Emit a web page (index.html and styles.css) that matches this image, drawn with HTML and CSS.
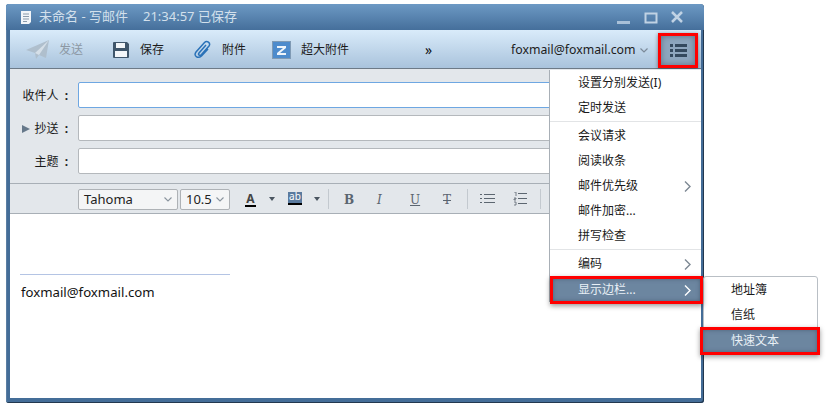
FILE: index.html
```html
<!DOCTYPE html>
<html lang="zh">
<head>
<meta charset="utf-8">
<title>未命名 - 写邮件</title>
<link rel="stylesheet" href="styles.css">
</head>
<body>
<div class="window">
  <header class="titlebar">
    <svg class="doc" width="12" height="15" viewBox="0 0 12 15"><path d="M1 1h10v11l-2 2H1z" fill="#f2f5f8"/><path d="M3 4h6M3 6.500h6M3 9h6M3 11.500h4" stroke="#8a9aaa"/></svg>
    <span class="title-name">未命名 - 写邮件</span>
    <span class="title-time">21:34:57 已保存</span>
    <span class="spacer"></span>
    <svg class="winbtns" width="70" height="14" viewBox="0 0 70 14"><path d="M0 10h13v3H0z" fill="#a9c0d8"/><path d="M28.500 2.500h11v9h-11z" fill="none" stroke="#c0d2e4" stroke-width="2"/><path d="M55 1l10 10M65 1L55 11" stroke="#c0d2e4" stroke-width="2.500"/></svg>
  </header>
  <div class="toolbar">
    <span class="tool send">
      <svg width="25" height="20" viewBox="0 0 25 20"><path d="M0 10L23 0l-3 18-7-3-3 4-1-6z" fill="#afbfcd"/><path d="M9 13L23 0 13 15" fill="#d5dfe8"/></svg>
      <span class="tool-label dim">发送</span>
    </span>
    <span class="tool save">
      <svg width="18" height="18" viewBox="0 0 18 18"><path d="M1 2a1 1 0 011-1h13l2 2v13a1 1 0 01-1 1H2a1 1 0 01-1-1z" fill="#3f566b"/><path d="M4 2h9v5H4zM3 10h12v6H3z" fill="#f3f6f9"/></svg>
      <span class="tool-label">保存</span>
    </span>
    <span class="tool clip">
      <svg width="19" height="20" viewBox="0 0 19 20"><path d="M13 5l-7 8c-1.500 2 1 3 2.500 1.500L16 6c2-3-2-6-4.500-3.500L3 12c-3 4 2 7 5.500 4L15 9" fill="none" stroke="#2a72b8" stroke-width="1.500"/></svg>
      <span class="tool-label">附件</span>
    </span>
    <span class="tool big">
      <svg width="19" height="18" viewBox="0 0 19 18"><rect x=".5" y=".5" width="18" height="17" fill="#4d8bcc" stroke="#7f9ab4"/><path d="M5 5h9v2l-6 5h6v2H5v-2l6-5H5z" fill="#eef4fa"/></svg>
      <span class="tool-label">超大附件</span>
    </span>
    <span class="more">»</span>
    <span class="account">foxmail@foxmail.com</span>
    <svg class="acct-caret" width="8" height="5" viewBox="0 0 8 5"><path d="M.5.500L4 4 7.500.500" fill="none" stroke="#7b8a99" stroke-width="1.200"/></svg>
    <span class="menu-btn">
      <svg width="17" height="13" viewBox="0 0 17 13"><path d="M0 0h3v3H0zM5 0h12v3H5zM0 5h3v3H0zM5 5h12v3H5zM0 10h3v3H0zM5 10h12v3H5z" fill="#34495e"/></svg>
    </span>
  </div>
  <div class="fields">
    <div class="field"><label class="lab">收件人<span class="colon">:</span></label><div class="input focus"></div></div>
    <div class="field"><label class="lab"><i class="tri"></i>抄送<span class="colon">:</span></label><div class="input"></div></div>
    <div class="field"><label class="lab">主题<span class="colon">:</span></label><div class="input"></div></div>
  </div>
  <div class="format">
    <div class="select font"><span>Tahoma</span><svg width="8" height="5" viewBox="0 0 8 5"><path d="M.5.500L4 4 7.500.500" fill="none" stroke="#8a949e" stroke-width="1.100"/></svg></div>
    <div class="select size"><span>10.5</span><svg width="8" height="5" viewBox="0 0 8 5"><path d="M.5.500L4 4 7.500.500" fill="none" stroke="#8a949e" stroke-width="1.100"/></svg></div>
    <span class="fmt color">A</span>
    <i class="caret c1"></i>
    <span class="fmt hilite">ab</span>
    <i class="caret c2"></i>
    <i class="sep s1"></i>
    <span class="fmt bold">B</span>
    <span class="fmt ital">I</span>
    <span class="fmt under">U</span>
    <span class="fmt strike">T</span>
    <i class="sep s2"></i>
    <svg class="list" width="15" height="10" viewBox="0 0 15 10"><path d="M0 .500h2M4 .500h11M0 4.500h2M4 4.500h11M0 8.500h2M4 8.500h11" stroke="#5c6670"/></svg>
    <svg class="nlist" width="15" height="14" viewBox="0 0 15 14"><path d="M1 0h2v4M1 6h2v1H1v1h2M1 10h2v3H1" fill="none" stroke="#5c6670" stroke-width=".8"/><path d="M5 1.500h9M5 6.500h9M5 11.500h9" stroke="#5c6670"/></svg>
    <i class="sep s3"></i>
  </div>
  <div class="body">
    <div class="sig-line"></div>
    <div class="sig">foxmail@foxmail.com</div>
  </div>
  <nav class="menu">
    <div class="item">设置分别发送(I)</div>
    <div class="item">定时发送</div>
    <div class="rule"></div>
    <div class="item">会议请求</div>
    <div class="item">阅读收条</div>
    <div class="item">邮件优先级<svg class="arrow" width="7" height="11" viewBox="0 0 7 11"><path d="M1 .500l5 5-5 5" fill="none" stroke="#7d8893" stroke-width="1.400"/></svg></div>
    <div class="item">邮件加密...</div>
    <div class="item">拼写检查</div>
    <div class="rule"></div>
    <div class="item">编码<svg class="arrow" width="7" height="11" viewBox="0 0 7 11"><path d="M1 .500l5 5-5 5" fill="none" stroke="#7d8893" stroke-width="1.400"/></svg></div>
    <div class="item hl">显示边栏...<svg class="arrow" width="7" height="11" viewBox="0 0 7 11"><path d="M1 .500l5 5-5 5" fill="none" stroke="#fff" stroke-width="1.400"/></svg></div>
  </nav>
  <nav class="submenu">
    <div class="item">地址簿</div>
    <div class="item">信纸</div>
    <div class="item hl">快速文本</div>
  </nav>
</div>
</body>
</html>
```
FILE: styles.css
```css
* { box-sizing: border-box; }
html, body { margin: 0; height: 100%; background: #fff; overflow: hidden; }
body {
  padding: 4px 0 0 6px;
  font: 12px/1.2 "Noto Sans", "Noto Sans CJK SC", sans-serif;
  color: #1a1a1a;
}
.window {
  position: relative;
  width: 698px;
  height: 399px;
  display: flex;
  flex-direction: column;
  padding: 0 3px 5px 4px;
  background: #446d98;
  border-radius: 3px 4px 3px 3px;
  box-shadow: inset -1px -1px 0 #22384f, inset 1px 0 0 #5b7ea3;
}
.titlebar {
  flex: 0 0 26px;
  margin: 0 -3px 0 -4px;
  padding: 0 22px 0 8px;
  display: flex;
  align-items: center;
  color: #d3e0ec;
  font-size: 13px;
  background: linear-gradient(#6c99c4, #456f9b);
  border-radius: 3px 4px 0 0;
}
.doc { margin-left: 6px; margin-right: 6px; }
.title-name { margin-left: 1px; }
.title-time { margin-left: 15px; }
.spacer { flex: 1; }
.winbtns { margin-top: 2px; margin-right: -5px; }
.toolbar {
  flex: 0 0 39px;
  display: flex;
  align-items: center;
  padding: 2px 0 0 16px;
  background: linear-gradient(#d9ebfa, #a9c3dc);
  border-bottom: 1px solid #6d7a87;
}
.tool { display: flex; align-items: center; color: #1c1c1c; }
.tool-label { margin-left: 10px; }
.dim { color: #8c98a4; }
.send { width: 86px; }
.save { width: 81px; }
.clip { width: 79px; }
.big { width: 153px; }
.send .tool-label { margin-left: 8px; }
.more { font-size: 14px; width: 86px; color: #111; }
.account { font-size: 12.300px; color: #1c1c1c; width: 129px; white-space: nowrap; }
.acct-caret { margin-left: 0; }
.menu-btn {
  margin-left: 10px;
  margin-top: 1px;
  width: 40px;
  height: 35px;
  display: flex;
  align-items: center;
  justify-content: center;
  border: 3px solid #f00;
  background: #8ea6be;
  box-shadow: inset 0 0 6px #5b6f84, 0 1px 4px rgba(0,0,0,.45);
}
.fields {
  flex: 0 0 115px;
  padding-top: 13px;
  display: flex;
  flex-direction: column;
  gap: 7px;
  background: #e3e7eb;
  border-bottom: 1px solid #a8afb6;
}
.field { display: flex; align-items: center; height: 26px; }
.lab {
  width: 68px;
  flex: none;
  padding: 2px 10px 0 0;
  text-align: right;
  position: relative;
  white-space: nowrap;
  font-size: 12px;
}
.colon { margin-left: 6px; font-weight: 700; }
.tri {
  position: absolute;
  left: 12px;
  top: 5px;
  border-left: 8px solid #66788a;
  border-top: 4.500px solid transparent;
  border-bottom: 4.500px solid transparent;
}
.input {
  flex: 1;
  height: 100%;
  background: #fff;
  border: 1px solid #b4b8bc;
  border-radius: 2px;
}
.focus { border-color: #6ea7e2; }
.format {
  flex: 0 0 30px;
  position: relative;
  background: #e3e7eb;
  border-bottom: 1px solid #a8afb6;
  display: flex;
  align-items: center;
  padding: 2px 0 0 68px;
}
.select {
  height: 21px;
  display: flex;
  align-items: center;
  justify-content: space-between;
  background: #f4f5f6;
  border: 1px solid #aeb2b6;
  border-radius: 2px;
  padding: 0 5px;
  font-size: 13px;
  color: #222;
}
.font { width: 100px; padding-right: 5px; }
.size { width: 50px; margin-left: 2px; }
.fmt, .caret, .sep, .list, .nlist { position: absolute; }
.fmt { font-family: "DejaVu Serif", serif; color: #5b6570; font-size: 12px; line-height: 16px; top: 7px; }
.color { left: 235px; width: 11px; font-family: "Noto Sans", sans-serif; font-weight: 700; color: #444; text-align: center; border-bottom: 2px solid #000; line-height: 13px; top: 8px; }
.hilite { left: 278px; width: 14px; height: 13px; top: 8px; background: #5a7a9e; color: #fff; font: 10px/9px "Noto Sans", sans-serif; text-align: center; border-bottom: 2px solid #000; }
.caret { top: 13px; border-top: 4px solid #4a5560; border-left: 3.500px solid transparent; border-right: 3.500px solid transparent; }
.c1 { left: 259px; }
.c2 { left: 304px; }
.sep { top: 5px; width: 1px; height: 20px; background: #c3c9cf; }
.s1 { left: 318px; }
.s2 { left: 457px; }
.s3 { left: 530px; }
.bold { left: 334px; font-weight: 700; top: 8px; }
.ital { left: 367px; font-style: italic; top: 8px; }
.under { left: 400px; text-decoration: underline; top: 8px; }
.strike { left: 433px; text-decoration: line-through; top: 8px; }
.list { left: 470px; top: 10px; }
.nlist { left: 503px; top: 8px; }
.body { flex: 1; background: #fff; padding: 60px 0 0 10px; }
.sig-line { width: 210px; height: 1px; background: #b4c4e4; }
.sig { margin-top: 8px; margin-left: 1px; font-size: 13.200px; color: #111; line-height: 18px; }
.menu {
  position: absolute;
  left: 543px;
  top: 66px;
  width: 152px;
  height: 232px;
  padding-top: 1px;
  background: #fff;
  border-left: 1px solid #a8afb6;
}
.item {
  height: 25px;
  display: flex;
  align-items: center;
  justify-content: space-between;
  padding: 0 10px 0 28px;
  color: #1a1a1a;
}
.rule { height: 1px; margin: 0 0 2px; background: #e2e4e6; }
.hl {
  color: #e9f0f6;
  background: #6c86a0;
  outline: 3px solid #f00;
  outline-offset: -1px;
  box-shadow: inset 0 0 5px #3f5368, 0 2px 5px 2px rgba(0,0,0,.4);
  position: relative;
  z-index: 2;
}
.menu .hl { margin-left: 2px; padding-left: 26px; margin-top: 1px; height: 24px; }
.submenu {
  position: absolute;
  left: 697px;
  top: 272px;
  width: 115px;
  height: 76px;
  padding-top: 1px;
  background: #fff;
  border: 1px solid #b9bfc5;
  border-radius: 3px;
}
.submenu .item { padding-left: 27px; }
.submenu .hl { margin: 1px -1px 0 -2px; height: 24px; padding-left: 29px; }
```
